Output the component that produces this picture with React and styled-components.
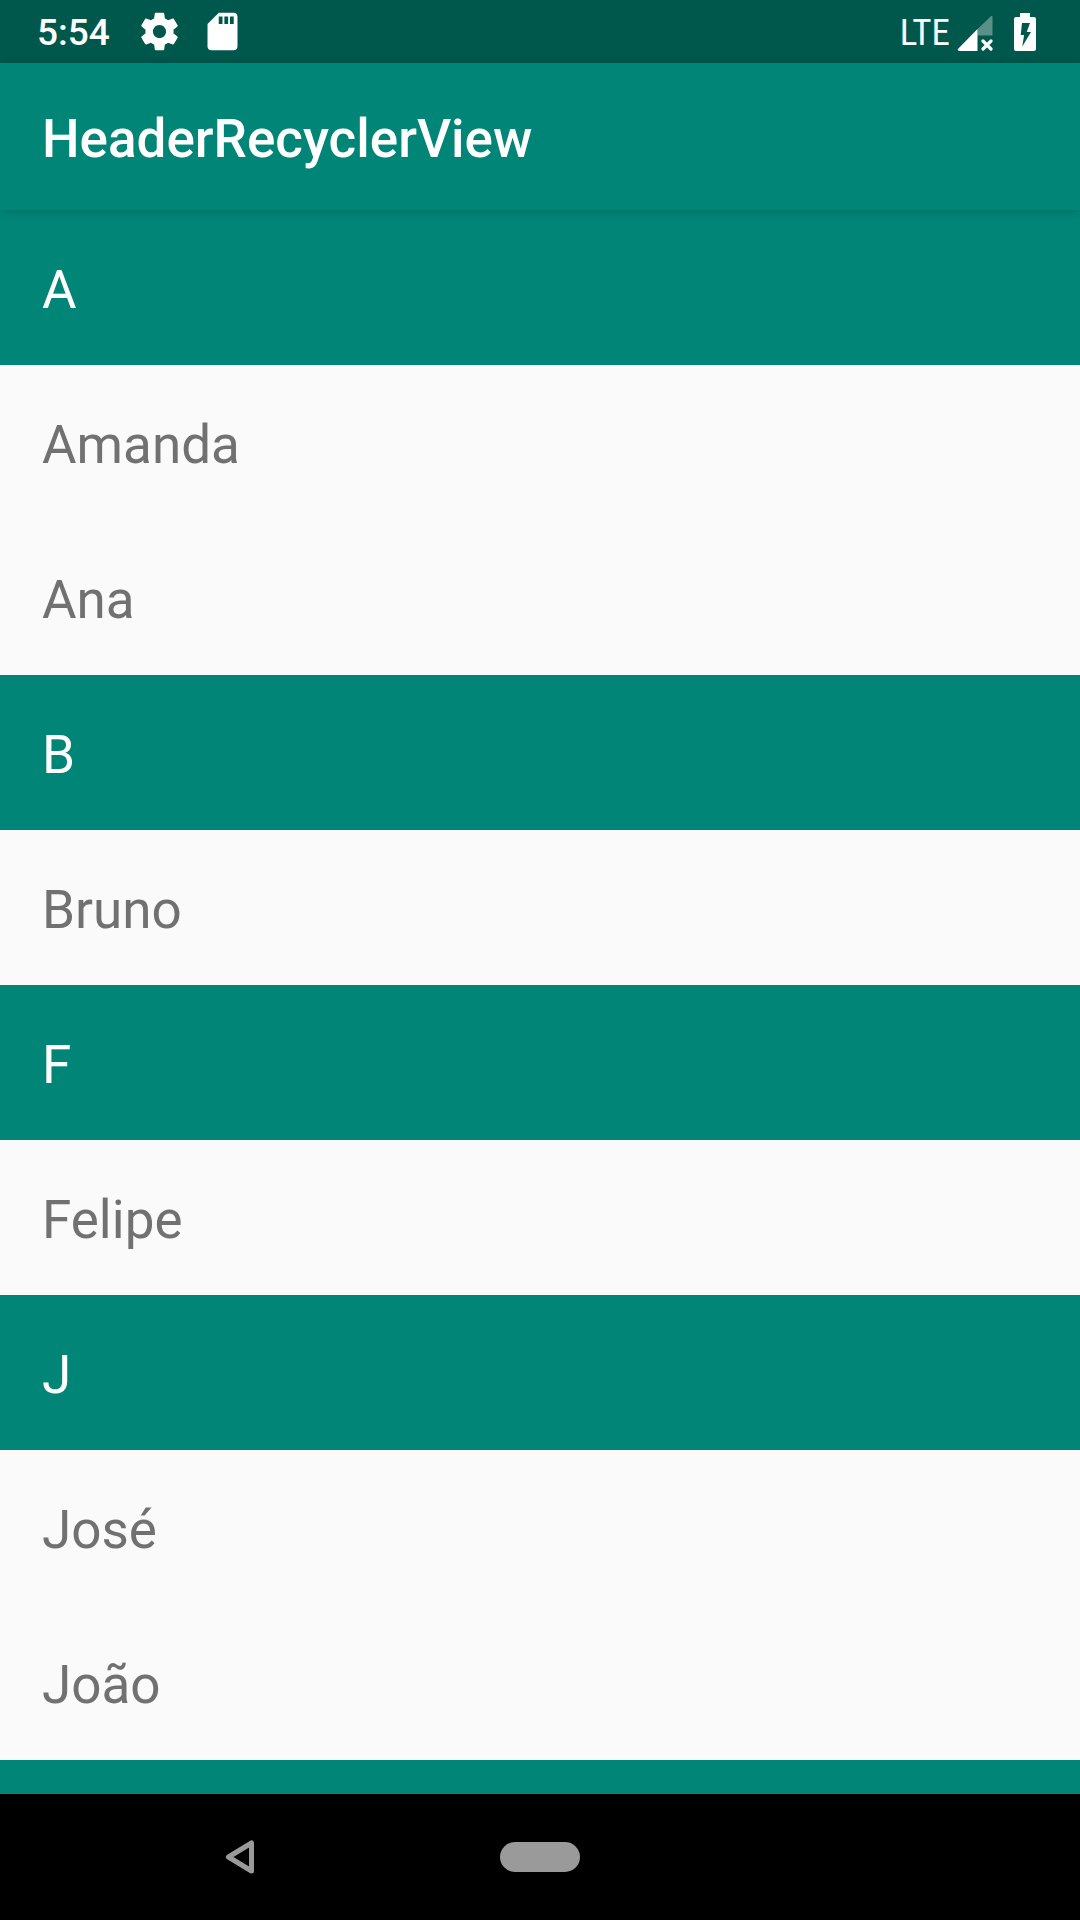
import React from "react";
import styled, { createGlobalStyle } from "styled-components";

const colors = {
  primary: "#008577",
  primaryDark: "#00574b",
  surface: "#fafafa",
  text: "#717171",
  nav: "#9a9a9a",
};

const GlobalStyle = createGlobalStyle`
  *, *::before, *::after { box-sizing: border-box; }
  body { margin: 0; background: #000; }
`;

const Screen = styled.div`
  display: flex;
  flex-direction: column;
  height: 100vh;
  overflow: hidden;
  font-family: Roboto, "Noto Sans", sans-serif;
  background: ${colors.surface};
`;

const StatusBar = styled.div`
  flex: none;
  display: flex;
  align-items: center;
  justify-content: space-between;
  height: 63px;
  padding: 0 44px 0 37px;
  color: #fff;
  background: ${colors.primaryDark};
`;

const StatusGroup = styled.div`
  display: flex;
  align-items: center;
  gap: ${(p) => p.$gap}px;
`;

const Clock = styled.time`
  padding: 3px 9px 0 0;
  font-size: 37px;
  line-height: 44px;
  font-weight: 500;
`;

const Network = styled.span`
  padding-top: 2px;
  font-family: "Roboto Condensed", "Liberation Sans Narrow", Roboto, sans-serif;
  font-size: 37px;
  line-height: 44px;
`;

const StatusIcon = styled.svg`
  display: block;
  flex: none;
  fill: currentColor;
`;

const AppBar = styled.header`
  position: relative;
  z-index: 1;
  flex: none;
  display: flex;
  align-items: center;
  height: 147px;
  padding: 4px 42px 0;
  color: #fff;
  background: ${colors.primary};
  box-shadow: 0 2px 8px rgba(0, 0, 0, 0.14);
`;

const Title = styled.h1`
  margin: 0;
  font-size: 53px;
  line-height: 62px;
  font-weight: 500;
`;

const List = styled.main`
  flex: 1;
  min-height: 0;
  overflow: hidden;
`;

const SectionHeader = styled.h2`
  display: flex;
  align-items: center;
  height: 155px;
  margin: 0;
  padding: 4px 42px 0;
  font-size: 53px;
  line-height: 62px;
  font-weight: 400;
  color: #fff;
  background: ${colors.primary};
`;

const Names = styled.ul`
  margin: 0;
  padding: 0;
  list-style: none;
`;

const NameRow = styled.li`
  display: flex;
  align-items: center;
  height: 155px;
  padding: 4px 42px 0;
  font-size: 53px;
  line-height: 62px;
  color: ${colors.text};
`;

const NavBar = styled.nav`
  flex: none;
  display: grid;
  grid-template-columns: repeat(3, 1fr);
  align-items: center;
  height: 126px;
  padding: 0 90px;
  background: #000;
`;

const NavButton = styled.button`
  display: flex;
  align-items: center;
  justify-content: center;
  height: 100%;
  padding: 0;
  border: 0;
  color: ${colors.nav};
  background: transparent;
`;

const HomePill = styled.span`
  width: 80px;
  height: 30px;
  border-radius: 15px;
  background: currentColor;
`;

const sections = [
  { letter: "A", names: ["Amanda", "Ana"] },
  { letter: "B", names: ["Bruno"] },
  { letter: "F", names: ["Felipe"] },
  { letter: "J", names: ["José", "João"] },
];

const GearIcon = () => (
  <StatusIcon width="45" height="45" viewBox="0 0 24 24" aria-hidden="true">
    <path d="M19.43 12.98c.04-.32.07-.64.07-.98s-.03-.66-.07-.98l2.11-1.65c.19-.15.24-.42.12-.64l-2-3.46c-.12-.22-.39-.3-.61-.22l-2.49 1c-.52-.4-1.08-.73-1.69-.98l-.38-2.65C14.46 2.18 14.25 2 14 2h-4c-.25 0-.46.18-.49.42l-.38 2.65c-.61.25-1.17.59-1.69.98l-2.49-1c-.23-.09-.49 0-.61.22l-2 3.46c-.13.22-.07.49.12.64l2.11 1.65c-.04.32-.07.65-.07.98s.03.66.07.98l-2.11 1.65c-.19.15-.24.42-.12.64l2 3.46c.12.22.39.3.61.22l2.49-1c.52.4 1.08.73 1.69.98l.38 2.65c.03.24.24.42.49.42h4c.25 0 .46-.18.49-.42l.38-2.65c.61-.25 1.17-.59 1.69-.98l2.49 1c.23.09.49 0 .61-.22l2-3.46c.12-.22.07-.49-.12-.64l-2.11-1.65zM12 15.5c-1.93 0-3.5-1.57-3.5-3.5s1.57-3.5 3.5-3.5 3.5 1.57 3.5 3.5-1.57 3.5-3.5 3.5z" />
  </StatusIcon>
);

const SdCardIcon = () => (
  <StatusIcon width="45" height="45" viewBox="0 0 24 24" aria-hidden="true">
    <path d="M18 2h-8L4.02 8 4 20c0 1.1.9 2 2 2h12c1.1 0 2-.9 2-2V4c0-1.1-.9-2-2-2zm-6 6h-2V4h2v4zm3 0h-2V4h2v4zm3 0h-2V4h2v4z" />
  </StatusIcon>
);

const SignalIcon = () => (
  <StatusIcon width="36" height="38" viewBox="0 0 36 38" aria-hidden="true">
    <path opacity=".35" d="M20.5 16 34 3.2q1.5-1 1.5 1V22.5h-15z" />
    <path d="M20.5 16v22H2.2q-2.4-.6-1-2.2z" />
    <path d="m26 28 8 8m0-8-8 8" fill="none" stroke="currentColor" strokeWidth="3.2" strokeLinecap="round" />
  </StatusIcon>
);

const BatteryIcon = () => (
  <StatusIcon width="22" height="38" viewBox="0 0 22 38" aria-hidden="true">
    <path
      fillRule="evenodd"
      d="M6 0h10v4h4q2 0 2 2v30q0 2-2 2H2q-2 0-2-2V6q0-2 2-2h4zM8 10 6.7 22h3.4L8.3 33.5 17 19h-4.3L16 10z"
    />
  </StatusIcon>
);

const BackIcon = () => (
  <svg width="30" height="36" viewBox="0 0 30 36" aria-hidden="true">
    <path d="M3.5 18 26.5 4v28z" fill="none" stroke="currentColor" strokeWidth="5" strokeLinejoin="round" />
  </svg>
);

export default function App() {
  return (
    <Screen>
      <GlobalStyle />
      <StatusBar>
        <StatusGroup $gap={18}>
          <Clock>5:54</Clock>
          <GearIcon />
          <SdCardIcon />
        </StatusGroup>
        <StatusGroup $gap={21}>
          <StatusGroup $gap={7}>
            <Network>LTE</Network>
            <SignalIcon />
          </StatusGroup>
          <BatteryIcon />
        </StatusGroup>
      </StatusBar>
      <AppBar>
        <Title>HeaderRecyclerView</Title>
      </AppBar>
      <List>
        {sections.map(({ letter, names }) => (
          <section key={letter}>
            <SectionHeader>{letter}</SectionHeader>
            <Names>
              {names.map((name) => (
                <NameRow key={name}>{name}</NameRow>
              ))}
            </Names>
          </section>
        ))}
        <SectionHeader as="div" aria-hidden="true" />
      </List>
      <NavBar>
        <NavButton type="button" aria-label="Back">
          <BackIcon />
        </NavButton>
        <NavButton type="button" aria-label="Home">
          <HomePill />
        </NavButton>
      </NavBar>
    </Screen>
  );
}
